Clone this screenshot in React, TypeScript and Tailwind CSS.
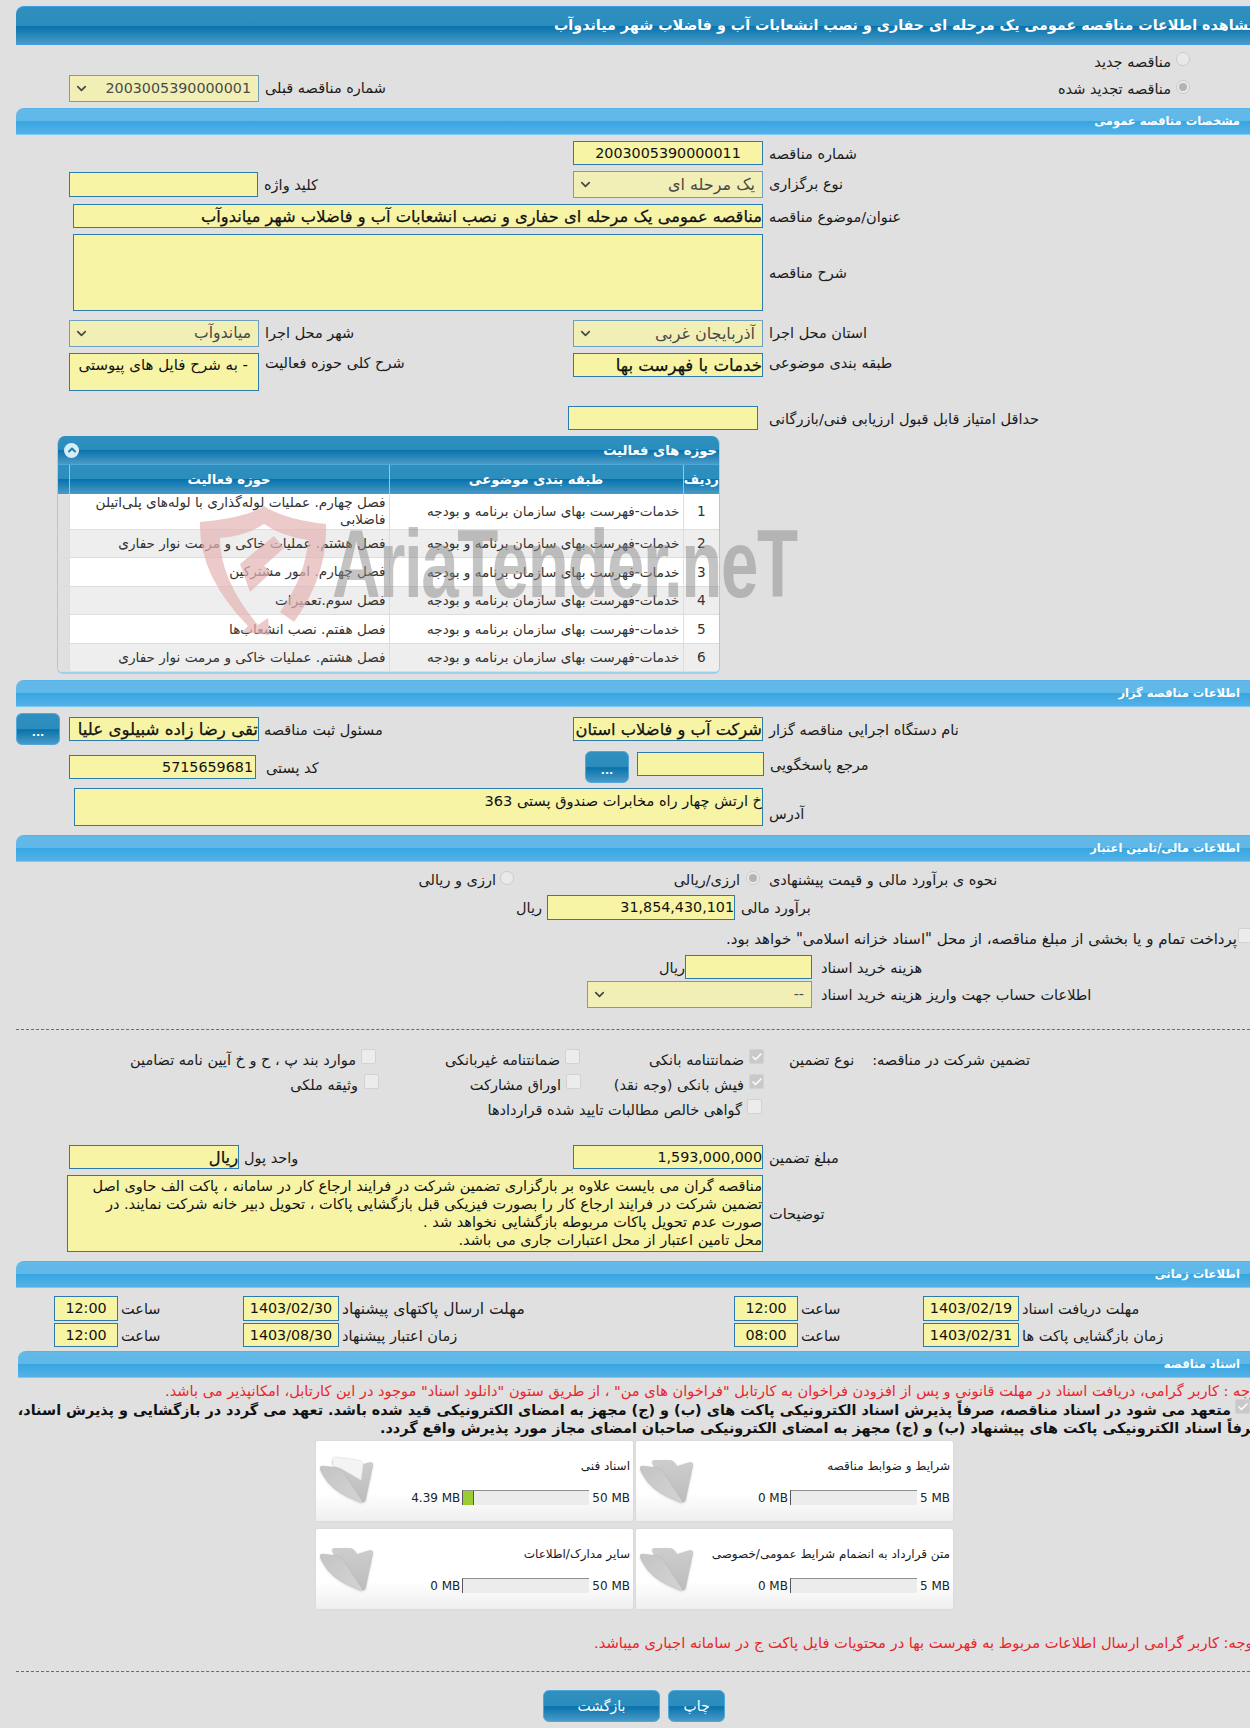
import type { ReactNode } from "react";
import { ChevronDown, Check, ChevronUp } from "lucide-react";

const label = "pt-[1px] text-[14.5px] leading-[24px] text-[#1a1a1a] whitespace-nowrap";
const inputBox = "border border-[#2b7ab0] bg-[#f7f4a5] pt-[1px] text-[#111] text-[14.3px] leading-[21px] overflow-hidden whitespace-nowrap shrink-0";
// the form's "strong" values look heavier than regular but are not real bold
const heavy = "text-[16.3px] [-webkit-text-stroke:0.25px_#111]";

function Section({ title, className = "" }: { title: string; className?: string }) {
  return (
    <div className={`h-[27px] ml-[16px] rounded-tl-[8px] border-t border-[#56b4ea] border-b-[#7cc8f0] border-b bg-[linear-gradient(#63b9e8_0%,#5fb8e8_48%,#38a6e1_50%,#54b2e6_100%)] pr-[10px] text-right text-[11.5px] font-bold leading-[25px] text-white ${className}`} dir="rtl">
      {title}
    </div>
  );
}

function Input({ value, className = "", align = "right" }: { value?: string; className?: string; align?: "right" | "left" | "center" }) {
  const alignClass = align === "center" ? "text-center" : "text-right";
  return (
    <div className={`${inputBox} ${alignClass} ${className}`} dir={align === "right" ? "rtl" : "ltr"}>
      {value}
    </div>
  );
}

function Select({ value, className = "", digits = false }: { value: string; className?: string; digits?: boolean }) {
  return (
    <div className={`flex h-[27px] shrink-0 items-center justify-between border border-[#6c9fc0] bg-[#f1efb6] pl-[4px] pr-[7px] text-[#4a4a4a] ${digits ? "text-[14.3px]" : "text-[16px]"} ${className}`}>
      <ChevronDown size={15} strokeWidth={2.6} className="text-[#444]" />
      <span dir="rtl">{value}</span>
    </div>
  );
}

function Radio({ checked = false }: { checked?: boolean }) {
  return (
    <span className="flex h-[14px] w-[14px] shrink-0 items-center justify-center rounded-full border border-[#cccccc] bg-[#e9e9e9]">
      {checked ? <span className="h-[8px] w-[8px] rounded-full bg-[#b4b4b4]" /> : null}
    </span>
  );
}

function Tick({ checked = false, className = "" }: { checked?: boolean; className?: string }) {
  return (
    <span className={`flex h-[15px] w-[15px] shrink-0 items-center justify-center rounded-[2px] border border-[#d2d2d2] ${checked ? "bg-[#c9c9c9]" : "bg-[#ececec]"} ${className}`}>
      {checked ? <Check size={12} strokeWidth={3} className="text-white" /> : null}
    </span>
  );
}

function Row({ left, right, className = "" }: { left?: ReactNode; right?: ReactNode; className?: string }) {
  return (
    <div className={`flex ${className}`}>
      <div className="flex w-[573px] shrink-0 pl-[69px]">{left}</div>
      <div className="flex flex-1">{right}</div>
    </div>
  );
}

function DotButton({ className = "" }: { className?: string }) {
  return (
    <div className={`flex h-[32px] w-[44px] shrink-0 items-end justify-center rounded-[6px] border border-[#4fa8da] bg-[linear-gradient(#2f90bf_0%,#2b8dbd_50%,#0872ac_52%,#4a9bc6_100%)] pb-[6px] text-[11px] font-bold leading-none text-white ${className}`}>
      ...
    </div>
  );
}

function ActionButton({ text, className = "" }: { text: string; className?: string }) {
  return (
    <div className={`flex h-[32px] shrink-0 items-center justify-center rounded-[6px] border border-[#4fa8da] bg-[linear-gradient(#2f90bf_0%,#2b8dbd_50%,#0872ac_52%,#4a9bc6_100%)] text-[14px] text-white ${className}`} dir="rtl">
      {text}
    </div>
  );
}

function Folder({ paper = false, id }: { paper?: boolean; id: string }) {
  return (
    <svg width="56" height="50" viewBox="0 0 56 50" className="shrink-0 drop-shadow-[0_1px_1px_rgba(0,0,0,0.15)]">
      <defs>
        <linearGradient id={`${id}-back`} x1="0" y1="0" x2="0" y2="1">
          <stop offset="0" stopColor="#cdcdcd" />
          <stop offset="1" stopColor="#bcbcbc" />
        </linearGradient>
        <linearGradient id={`${id}-front`} x1="0" y1="0" x2="1" y2="1">
          <stop offset="0" stopColor="#c4c4c4" />
          <stop offset="1" stopColor="#d4d4d4" />
        </linearGradient>
      </defs>
      <path d="M12 6 Q12 4 15 4 L30 4 Q33 4 36 8 L37 10 L50 6 Q54 6 53 10 L46 43 Q45 47 42 46 L24 38 Z" fill={`url(#${id}-back)`} />
      {paper ? <path d="M13 3 Q13 1 16 1 L38 4 Q43 5 43 9 L41 24 L22 13 L13 10 Z" fill="#f4f4f4" stroke="#e2e2e2" strokeWidth="0.6" /> : null}
      <path d="M0 12 Q0 10 3 10 L18 12 Q22 13 24 17 L41 43 Q44 47 40 46 L26 40 Q11 32 5 22 Q1 16 0 12 Z" fill={`url(#${id}-front)`} stroke="#b4b4b4" strokeWidth="0.5" />
    </svg>
  );
}

function FileCard({ id, title, used, max, fill = 0, paper = false }: { id: string; title: string; used: string; max: string; fill?: number; paper?: boolean }) {
  return (
    <div className="flex h-[80px] w-[317px] items-center rounded-[2px] bg-[linear-gradient(#ffffff_0%,#ffffff_65%,#efefef_100%)] pl-[4px] shadow-[0_0_2px_#d0d0d0]">
      <Folder paper={paper} id={id} />
      <div className="ml-auto flex w-[255px] flex-col items-end pr-[3px]">
        <div className="pt-[2px] text-[12px] leading-[16px] text-[#1a1a1a] whitespace-nowrap" dir="rtl">{title}</div>
        <div className="mt-[15px] flex items-center text-[12px] text-[#222] whitespace-nowrap">
          <span className="mr-[2px]">{used}</span>
          <div className="flex h-[15px] w-[127px] border-t border-l border-t-[#8f8f8f] border-l-[#555] bg-[#ececec]">
            {fill ? <div style={{ width: fill }} className="border-r border-r-[#555] bg-[#9acd32]" /> : null}
          </div>
          <span className="ml-[3px]">{max}</span>
        </div>
      </div>
    </div>
  );
}

const rows = [
  "فصل چهارم. عملیات لوله‌گذاری با لوله‌های پلی‌اتیلن فاضلابی",
  "فصل هشتم. عملیات خاکی و مرمت نوار حفاری",
  "فصل چهارم. امور مشترکین",
  "فصل سوم.تعمیرات",
  "فصل هفتم. نصب انشعاب‌ها",
  "فصل هشتم. عملیات خاکی و مرمت نوار حفاری",
];

function ActivityPanel() {
  const headerBg = "bg-[linear-gradient(#2f90bf_0%,#2b8dbd_48%,#0872ac_50%,#4a9bc6_100%)]";
  return (
    <div className="relative mt-[6px] ml-[57px] w-[663px] overflow-hidden rounded-t-[8px] rounded-b-[6px] border-b-2 border-b-[#9ed0ec] border-r border-r-[#9ed0ec] border-l border-l-[#9ed0ec]" dir="rtl">
      <div className={`flex h-[29px] items-center justify-between pr-[2px] pl-[6px] ${headerBg} border-b border-[#4fa8da] text-[13.2px] font-bold text-white`}>
        <span className="pt-[2px]">حوزه های فعالیت</span>
        <span className="flex h-[15px] w-[15px] items-center justify-center rounded-full bg-[#d8ecf8]">
          <ChevronUp size={12} strokeWidth={4} className="text-[#1b7fb5]" />
        </span>
      </div>
      <table className="w-full table-fixed border-collapse text-[13.6px] text-[#333]">
        <colgroup>
          <col className="w-[36px]" />
          <col className="w-[294px]" />
          <col className="w-[320px]" />
          <col />
        </colgroup>
        <thead>
          <tr className={`h-[29px] ${headerBg} text-white text-[13.2px]`}>
            <th className="border-l border-[#8cc8ea] font-bold">ردیف</th>
            <th className="border-l border-[#8cc8ea] font-bold">طبقه بندی موضوعی</th>
            <th className="border-l border-[#8cc8ea] font-bold">حوزه فعالیت</th>
            <th />
          </tr>
        </thead>
        <tbody>
          {rows.map((text, i) => (
            <tr key={i} className={`${i === 0 ? "h-[35px]" : "h-[28.6px]"} ${i % 2 ? "bg-[#eeeeee]" : "bg-white"} border-b border-[#dddddd]`}>
              <td className="border-l border-[#dddddd] text-center">{i + 1}</td>
              <td className="border-l border-[#dddddd] pr-[3px] whitespace-nowrap">خدمات-فهرست بهای سازمان برنامه و بودجه</td>
              <td className="border-l border-[#dddddd] pr-[3px] pl-[20px] leading-[17px]">{text}</td>
              <td className="bg-[#e0e0e0]" />
            </tr>
          ))}
        </tbody>
      </table>
    </div>
  );
}

function Watermark() {
  return (
    <div className="pointer-events-none absolute left-[196px] top-[500px] h-[140px] w-[620px]">
      <svg width="140" height="135" viewBox="0 0 140 135" className="absolute left-0 top-0 opacity-70">
        <path d="M4 22 Q50 18 68 6 Q90 20 130 24 Q132 75 98 122 L 84 112 Q110 75 112 40 Q85 36 68 24 Q50 36 24 38 Q24 80 62 125 L72 118 L74 135 L46 132 L52 126 Q2 75 4 22 Z" fill="#e5b4b4" />
        <path d="M44 64 L78 36 L88 48 L68 66 L76 72 L54 92 Z" fill="#e5b4b4" />
      </svg>
      <div className="absolute left-[136px] top-[16px] origin-left scale-x-[0.7] font-['Liberation_Sans',sans-serif] text-[96px] font-bold leading-none tracking-[-2px] whitespace-nowrap text-[#8a8a8a] opacity-50">
        AriaTender.neT
      </div>
    </div>
  );
}

export default function App() {
  return (
    <div className="relative h-[1729px] w-[1250px] overflow-hidden bg-[#e0e0e0] font-['DejaVu_Sans',sans-serif] border-b border-b-white">
      <div className="mt-[6px] ml-[16px] flex h-[39px] items-center overflow-hidden rounded-tl-[8px] border-t border-b border-[#3b9de0] bg-[linear-gradient(#2f90bf_0%,#2b8dbd_50%,#0872ac_52%,#4a9bc6_100%)] pl-[538px]">
        <div className="text-[14.3px] font-bold whitespace-nowrap text-white" dir="rtl">مشاهده اطلاعات مناقصه عمومی یک مرحله ای حفاری و نصب انشعابات آب و فاضلاب شهر میاندوآب</div>
      </div>

      <div className="mt-[6px] flex h-[20px] items-center justify-end pr-[60px]">
        <span className={label} dir="rtl">مناقصه جدید</span>
        <span className="ml-[5px] -mt-[5px]"><Radio /></span>
      </div>

      <Row
        className="mt-[4px] h-[27px]"
        left={<><Select value="2003005390000001" digits className="w-[190px]" /><span className={`${label} ml-[6px]`} dir="rtl">شماره مناقصه قبلی</span></>}
        right={<div className="flex w-full items-center justify-end pr-[60px]"><span className={label} dir="rtl">مناقصه تجدید شده</span><span className="ml-[5px] -mt-[4px]"><Radio checked /></span></div>}
      />

      <Section title="مشخصات مناقصه عمومی" className="mt-[6px]" />

      <Row
        className="mt-[6px] h-[24px]"
        right={<><Input value="2003005390000011" align="center" className="h-[24px] w-[190px]" /><span className={`${label} ml-[6px]`} dir="rtl">شماره مناقصه</span></>}
      />
      <Row
        className="mt-[6px] h-[27px]"
        left={<><Input className="mt-[1px] h-[25px] w-[189px]" /><span className={`${label} ml-[6px] mt-[1px]`} dir="rtl">کلید واژه</span></>}
        right={<><Select value="یک مرحله ای" className="w-[190px]" /><span className={`${label} ml-[6px]`} dir="rtl">نوع برگزاری</span></>}
      />
      <div className="mt-[6px] flex h-[24px] pl-[73px]">
        <Input value="مناقصه عمومی یک مرحله ای حفاری و نصب انشعابات آب و فاضلاب شهر میاندوآب" className={`h-[24px] w-[690px] ${heavy}`} />
        <span className={`${label} ml-[6px]`} dir="rtl">عنوان/موضوع مناقصه</span>
      </div>
      <div className="mt-[6px] flex h-[77px] items-center pl-[73px]">
        <Input className="h-[77px] w-[690px]" />
        <span className={`${label} ml-[6px]`} dir="rtl">شرح مناقصه</span>
      </div>
      <Row
        className="mt-[9px] h-[27px]"
        left={<><Select value="میاندوآب" className="w-[190px] !text-[15.6px]" /><span className={`${label} ml-[6px]`} dir="rtl">شهر محل اجرا</span></>}
        right={<><Select value="آذربایجان غربی" className="w-[190px]" /><span className={`${label} ml-[6px]`} dir="rtl">استان محل اجرا</span></>}
      />
      <Row
        className="mt-[6px] h-[38px]"
        left={<><Input value="- به شرح فایل های پیوستی" className="h-[38px] w-[190px] px-[10px] !text-[15px]" /><span className={`${label} ml-[6px] -mt-[3px]`} dir="rtl">شرح کلی حوزه فعالیت</span></>}
        right={<><Input value="خدمات با فهرست بها" className={`h-[24px] w-[190px] ${heavy} !text-[16.6px]`} /><span className={`${label} ml-[6px] -mt-[3px]`} dir="rtl">طبقه بندی موضوعی</span></>}
      />
      <div className="mt-[15px] flex h-[24px] pl-[568px]">
        <Input className="h-[24px] w-[190px]" />
        <span className={`${label} ml-[11px]`} dir="rtl">حداقل امتیاز قابل قبول ارزیابی فنی/بازرگانی</span>
      </div>

      <ActivityPanel />

      <Section title="اطلاعات مناقصه گزار" className="mt-[6px]" />

      <div className="mt-[6px] flex h-[32px]">
        <DotButton className="ml-[16px]" />
        <div className="ml-[9px] mt-[4px] flex h-[24px] w-[504px]">
          <Input value="تقی رضا زاده شبیلوی علیا" className={`h-[24px] w-[190px] ${heavy} !text-[16.6px]`} />
          <span className={`${label} ml-[5px]`} dir="rtl">مسئول ثبت مناقصه</span>
        </div>
        <div className="mt-[4px] flex h-[24px]">
          <Input value="شرکت آب و فاضلاب استان" className={`h-[24px] w-[190px] ${heavy}`} />
          <span className={`${label} ml-[6px]`} dir="rtl">نام دستگاه اجرایی مناقصه گزار</span>
        </div>
      </div>
      <div className="mt-[6px] flex h-[32px]">
        <div className="ml-[69px] mt-[4px] flex h-[24px] w-[516px]">
          <Input value="5715659681" align="left" className="h-[24px] w-[187px] pr-[2px]" />
          <span className={`${label} ml-[10px]`} dir="rtl">کد پستی</span>
        </div>
        <DotButton />
        <div className="ml-[8px] mt-[1px] flex h-[24px]">
          <Input className="h-[24px] w-[127px]" />
          <span className={`${label} ml-[6px]`} dir="rtl">مرجع پاسخگویی</span>
        </div>
      </div>
      <div className="mt-[5px] flex h-[38px] items-end pl-[74px]">
        <Input value="خ ارتش چهار راه مخابرات صندوق پستی 363" className="h-[38px] w-[689px] !text-[14.6px]" />
        <span className={`${label} ml-[6px]`} dir="rtl">آدرس</span>
      </div>

      <Section title="اطلاعات مالی/تامین اعتبار" className="mt-[9px]" />

      <div className="mt-[5px] flex h-[24px] items-center">
        <span className={`${label} ml-[420px] w-[76px]`} dir="rtl">ارزی و ریالی</span>
        <span className="ml-[4px] -mt-[3px]"><Radio /></span>
        <span className={`${label} ml-[162px] w-[64px]`} dir="rtl">ارزی/ریالی</span>
        <span className="ml-[6px] -mt-[3px]"><Radio checked /></span>
        <span className={`${label} ml-[9px]`} dir="rtl">نحوه ی برآورد مالی و قیمت پیشنهادی</span>
      </div>
      <div className="mt-[4px] flex h-[25px] items-center">
        <span className={`${label} ml-[518px] mr-[5px] w-[24px]`} dir="rtl">ریال</span>
        <Input value="31,854,430,101" align="left" className="h-[25px] w-[188px]" />
        <span className={`${label} ml-[6px]`} dir="rtl">برآورد مالی</span>
      </div>
      <div className="mt-[6px] flex h-[24px] items-center justify-end">
        <span className={`${label} !text-[15px]`} dir="rtl">پرداخت تمام و یا بخشی از مبلغ مناقصه، از محل "اسناد خزانه اسلامی" خواهد بود.</span>
        <Tick className="-mt-[6px] ml-[1px] -mr-[3px]" />
      </div>
      <div className="mt-[5px] flex h-[24px] items-center">
        <span className={`${label} ml-[661px] w-[24px]`} dir="rtl">ریال</span>
        <Input className="h-[24px] w-[127px]" />
        <span className={`${label} ml-[9px]`} dir="rtl">هزینه خرید اسناد</span>
      </div>
      <div className="mt-[2px] flex h-[27px] items-center pl-[587px]">
        <Select value="--" digits className="w-[225px] border-[#5b9cc4]" />
        <span className={`${label} ml-[9px]`} dir="rtl">اطلاعات حساب جهت واریز هزینه خرید اسناد</span>
      </div>

      <div className="mt-[21px] ml-[16px] border-t border-dashed border-[#2a7fb0]" />

      <div className="mt-[17px] flex h-[24px] items-center">
        <span className={`${label} ml-[130px] w-[226px]`} dir="rtl">موارد بند پ ، ح و خ آیین نامه تضامین</span>
        <Tick className="ml-[5px] -mt-[5px]" />
        <span className={`${label} ml-[61px] w-[123px]`} dir="rtl">ضمانتنامه غیربانکی</span>
        <Tick className="ml-[5px] -mt-[5px]" />
        <span className={`${label} ml-[62px] w-[102px]`} dir="rtl">ضمانتنامه بانکی</span>
        <Tick checked className="ml-[5px] -mt-[5px]" />
        <span className={`${label} ml-[25px]`} dir="rtl">نوع تضمین</span>
        <span className={`${label} ml-[18px]`} dir="rtl">تضمین شرکت در مناقصه:</span>
      </div>
      <div className="mt-[1px] flex h-[24px] items-center">
        <span className={`${label} ml-[286px] w-[72px]`} dir="rtl">وثیقه ملکی</span>
        <Tick className="ml-[6px] -mt-[5px]" />
        <span className={`${label} ml-[91px] w-[91px]`} dir="rtl">اوراق مشارکت</span>
        <Tick className="ml-[5px] -mt-[5px]" />
        <span className={`${label} ml-[26px] w-[137px]`} dir="rtl">فیش بانکی (وجه نقد)</span>
        <Tick checked className="ml-[5px] -mt-[5px]" />
      </div>
      <div className="mt-[1px] flex h-[24px] items-center">
        <span className={`${label} ml-[481px] w-[261px]`} dir="rtl">گواهی خالص مطالبات تایید شده قراردادها</span>
        <Tick className="ml-[5px] -mt-[5px]" />
      </div>

      <Row
        className="mt-[24px] h-[24px]"
        left={<><Input value="ریال" className={`h-[24px] w-[170px] ${heavy}`} /><span className={`${label} ml-[5px]`} dir="rtl">واحد پول</span></>}
        right={<><Input value="1,593,000,000" align="left" className="h-[24px] w-[190px]" /><span className={`${label} ml-[6px]`} dir="rtl">مبلغ تضمین</span></>}
      />
      <div className="mt-[6px] flex h-[77px] items-center pl-[67px]">
        <div className={`${inputBox} h-[77px] w-[696px] !text-[14.5px] !leading-[18px]`} dir="rtl">
          مناقصه گران می بایست علاوه بر بارگزاری تضمین شرکت در فرایند ارجاع کار در سامانه ، پاکت الف حاوی اصل
          <br />
          تضمین شرکت در فرایند ارجاع کار را بصورت فیزیکی قبل بازگشایی پاکات ، تحویل دبیر خانه شرکت نمایند. در
          <br />
          صورت عدم تحویل پاکات مربوطه بازگشایی نخواهد شد .
          <br />
          محل تامین اعتبار از محل اعتبارات جاری می باشد.
        </div>
        <span className={`${label} ml-[6px]`} dir="rtl">توضیحات</span>
      </div>

      <Section title="اطلاعات زمانی" className="mt-[9px]" />

      <div className="mt-[8px] flex h-[25px]">
        <Input value="12:00" align="center" className="ml-[54px] h-[25px] w-[64px]" />
        <span className={`${label} ml-[3px] w-[122px] text-left`} dir="rtl">ساعت</span>
        <Input value="1403/02/30" align="center" className="h-[25px] w-[96px]" />
        <span className={`${label} ml-[3px] w-[392px] text-left !text-[15.5px]`} dir="rtl">مهلت ارسال پاکتهای پیشنهاد</span>
        <Input value="12:00" align="center" className="h-[25px] w-[64px]" />
        <span className={`${label} ml-[3px] w-[122px] text-left`} dir="rtl">ساعت</span>
        <Input value="1403/02/19" align="center" className="h-[25px] w-[96px]" />
        <span className={`${label} ml-[3px]`} dir="rtl">مهلت دریافت اسناد</span>
      </div>
      <div className="mt-[2px] flex h-[25px]">
        <Input value="12:00" align="center" className="ml-[54px] h-[24px] w-[64px]" />
        <span className={`${label} ml-[3px] w-[122px] text-left`} dir="rtl">ساعت</span>
        <Input value="1403/08/30" align="center" className="h-[24px] w-[96px]" />
        <span className={`${label} ml-[3px] w-[392px] text-left`} dir="rtl">زمان اعتبار پیشنهاد</span>
        <Input value="08:00" align="center" className="h-[24px] w-[64px]" />
        <span className={`${label} ml-[3px] w-[122px] text-left`} dir="rtl">ساعت</span>
        <Input value="1403/02/31" align="center" className="h-[24px] w-[96px]" />
        <span className={`${label} ml-[3px]`} dir="rtl">زمان بازگشایی پاکت ها</span>
      </div>

      <Section title="اسناد مناقصه" className="mt-[3px] !ml-[18px]" />

      <div className="mt-[4px] flex h-[18px] justify-start pl-[165px]">
        <span className="text-[14.6px] leading-[18px] whitespace-nowrap text-[#e8262a]" dir="rtl">توجه : کاربر گرامی، دریافت اسناد در مهلت قانونی و پس از افزودن فراخوان به کارتابل "فراخوان های من" ، از طریق ستون "دانلود اسناد" موجود در این کارتابل، امکانپذیر می باشد.</span>
      </div>
      <div className="relative mt-[1px] h-[36px] text-[14.4px] font-bold leading-[18px] text-[#111]">
        <span className="absolute right-[19px] top-0 whitespace-nowrap" dir="rtl">متعهد می شود در اسناد مناقصه، صرفاً پذیرش اسناد الکترونیکی پاکت های (ب) و (ج) مجهز به امضای الکترونیکی قید شده باشد. تعهد می گردد در بازگشایی و پذیرش اسناد،</span>
        <span className="absolute top-[18px] left-[380px] whitespace-nowrap" dir="rtl">صرفاً اسناد الکترونیکی پاکت های پیشنهاد (ب) و (ج) مجهز به امضای الکترونیکی صاحبان امضای مجاز مورد پذیرش واقع گردد.</span>
        <Tick checked className="absolute top-[-2px] right-0" />
      </div>

      <div className="mt-[4px] ml-[316px] grid w-[637px] grid-cols-[317px_317px] gap-x-[3px] gap-y-[8px]">
        <FileCard id="f1" title="اسناد فنی" used="4.39 MB" max="50 MB" fill={11} paper />
        <FileCard id="f2" title="شرایط و ضوابط مناقصه" used="0 MB" max="5 MB" />
        <FileCard id="f3" title="سایر مدارک/اطلاعات" used="0 MB" max="50 MB" />
        <FileCard id="f4" title="متن قرارداد به انضمام شرایط عمومی/خصوصی" used="0 MB" max="5 MB" />
      </div>

      <div className="mt-[25px] flex h-[18px] pl-[594px]">
        <span className="text-[14.7px] leading-[18px] whitespace-nowrap text-[#e8262a]" dir="rtl">توجه: کاربر گرامی ارسال اطلاعات مربوط به فهرست بها در محتویات فایل پاکت ج در سامانه اجباری میباشد.</span>
      </div>

      <div className="mt-[19px] ml-[16px] border-t border-dashed border-[#2a7fb0]" />

      <div className="mt-[18px] flex pl-[543px]">
        <ActionButton text="بازگشت" className="w-[117px]" />
        <ActionButton text="چاپ" className="ml-[8px] w-[57px]" />
      </div>

      <Watermark />
    </div>
  );
}
